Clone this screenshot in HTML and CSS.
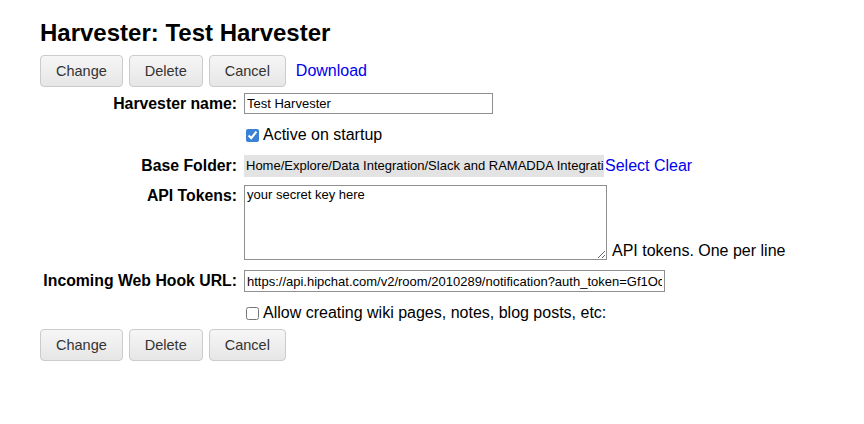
FILE: index.html
```html
<!DOCTYPE html>
<html>
<head>
<meta charset="utf-8">
<title>Harvester: Test Harvester</title>
<link rel="stylesheet" href="styles.css">
</head>
<body>
<div class="page">
  <h1 class="title">Harvester: Test Harvester</h1>
  <div class="actions">
    <button class="btn">Change</button>
    <button class="btn">Delete</button>
    <button class="btn">Cancel</button>
    <a class="link" href="#">Download</a>
  </div>
  <form class="form">
    <div class="row">
      <label class="label">Harvester name:</label>
      <div class="field"><input class="input input-name" type="text" value="Test Harvester"></div>
    </div>
    <div class="row">
      <div class="label"></div>
      <div class="field"><label class="check"><input type="checkbox" class="cb" checked><span>Active on startup</span></label></div>
    </div>
    <div class="row">
      <label class="label">Base Folder:</label>
      <div class="field"><div class="folder"><span class="folder-text">Home/Explore/Data Integration/Slack and RAMADDA Integration</span></div><a class="link" href="#">Select</a>&nbsp;<a class="link" href="#">Clear</a></div>
    </div>
    <div class="row row-api">
      <label class="label label-top">API Tokens:</label>
      <div class="field field-bottom"><textarea class="textarea">your secret key here</textarea><span class="hint">API tokens. One per line</span></div>
    </div>
    <div class="row">
      <label class="label">Incoming Web Hook URL:</label>
      <div class="field"><input class="input input-url" type="text" value="https://api.hipchat.com/v2/room/2010289/notification?auth_token=Gf1OcXyZ8k2LmN"></div>
    </div>
    <div class="row">
      <div class="label"></div>
      <div class="field"><label class="check"><input type="checkbox" class="cb"><span>Allow creating wiki pages, notes, blog posts, etc:</span></label></div>
    </div>
  </form>
  <div class="actions actions-bottom">
    <button class="btn">Change</button>
    <button class="btn">Delete</button>
    <button class="btn">Cancel</button>
  </div>
</div>
</body>
</html>
```
FILE: styles.css
```css
html, body {
  margin: 0;
  padding: 0;
  background: #fff;
}
body {
  font-family: "Liberation Sans", Arial, Helvetica, sans-serif;
  font-size: 16px;
  color: #000;
}
.page {
  padding: 19px 0 0 40px;
}
.title {
  margin: 0 0 8px 0;
  font-size: 24px;
  line-height: 28px;
  font-weight: bold;
}
.actions {
  display: flex;
  align-items: center;
  gap: 6px;
  height: 32px;
}
.btn {
  height: 32px;
  padding: 0 15px;
  border: 1px solid #cbcbcb;
  border-radius: 4px;
  background: linear-gradient(#f6f6f6, #e6e6e6);
  color: #333;
  font-family: "Liberation Sans", Arial, Helvetica, sans-serif;
  font-size: 14.5px;
  line-height: 30px;
  box-sizing: border-box;
}
.link {
  color: #0000ee;
  text-decoration: none;
  font-size: 16px;
  line-height: 18px;
}
.actions .link {
  margin-left: 4px;
}
.form {
  margin: 6px 0 0 0;
}
.row {
  display: grid;
  grid-template-columns: 197px 1fr;
  column-gap: 7px;
  align-items: center;
  margin-top: 10px;
}
.row:first-child {
  margin-top: 0;
}
.row-api {
  margin-top: 8px;
  align-items: start;
}
.label {
  text-align: right;
  font-weight: bold;
  font-size: 15.8px;
  line-height: 18px;
  white-space: nowrap;
}
.label-top {
  padding-top: 2px;
}
.field {
  display: flex;
  align-items: center;
  line-height: 18px;
}
.field-bottom {
  align-items: flex-end;
}
.input {
  box-sizing: border-box;
  height: 21px;
  margin: 0;
  padding: 0 2px;
  border: 1px solid #8f8f8f;
  border-radius: 0;
  font-family: "Liberation Sans", Arial, Helvetica, sans-serif;
  font-size: 13px;
  color: #000;
  background: #fff;
}
.input-name {
  width: 249px;
}
.input-url {
  width: 421px;
  height: 22px;
}
.check {
  display: flex;
  align-items: center;
  height: 21px;
}
.cb {
  width: 13px;
  height: 13px;
  margin: 1px 4px 0 2px;
  accent-color: #3b82d6;
}
.folder {
  box-sizing: border-box;
  width: 360px;
  height: 22px;
  margin-right: 1px;
  padding-left: 2px;
  background: #e3e3e3;
  font-size: 13px;
  line-height: 22px;
  white-space: nowrap;
  overflow: hidden;
}
.textarea {
  box-sizing: border-box;
  width: 363px;
  height: 75px;
  margin: 0;
  padding: 1px 2px;
  border: 1px solid #8f8f8f;
  border-radius: 0;
  font-family: "Liberation Sans", Arial, Helvetica, sans-serif;
  font-size: 13px;
  line-height: 15px;
  color: #000;
  resize: both;
}
.hint {
  margin-left: 5px;
}
.actions-bottom {
  margin-top: 6px;
}
```
